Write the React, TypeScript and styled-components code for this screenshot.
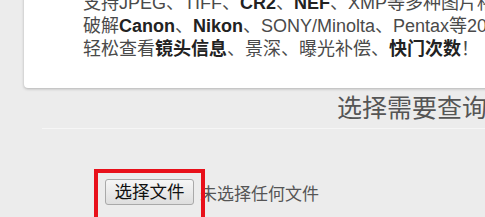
import React from 'react';
import styled, { createGlobalStyle } from 'styled-components';

const GlobalStyle = createGlobalStyle`
  html, body {
    margin: 0;
    padding: 0;
    background: #ececec;
    overflow: hidden;
  }
  body {
    font-family: 'Liberation Sans', 'Noto Sans CJK SC', sans-serif;
  }
`;

const Page = styled.div`
  width: 485px;
  height: 217px;
  overflow: hidden;
`;

const Card = styled.div`
  margin: -8px -80px 0 24px;
  padding: 0 0 27px 59px;
  background: #fff;
  border-radius: 4px;
  box-shadow: 0 1px 3px rgba(0, 0, 0, 0.25);
`;

const Line = styled.p`
  margin: 0;
  font-size: 18px;
  line-height: 23px;
  color: #4a4a4a;
  white-space: nowrap;

  b {
    color: #222;
    font-weight: bold;
  }
`;

const Heading = styled.h2`
  margin: 3px 0 0 42px;
  padding: 0 0 3px 295px;
  border-bottom: 1px solid #f6f6f6;
  font-size: 25px;
  line-height: 34px;
  font-weight: normal;
  color: #555;
  white-space: nowrap;
`;

const UploadRow = styled.div`
  display: flex;
  align-items: center;
  gap: 6px;
  margin-top: 50px;
  padding-left: 105px;
`;

const ButtonWrap = styled.div`
  position: relative;
`;

const FileButton = styled.button`
  width: 89px;
  height: 26px;
  padding: 0;
  border: 1px solid #a9a9a9;
  border-radius: 3px;
  background: linear-gradient(#f6f6f6, #dedede);
  font-family: 'Liberation Sans', 'Noto Sans CJK SC', sans-serif;
  font-size: 17.5px;
  line-height: 24px;
  color: #111;
`;

const Highlight = styled.span`
  position: absolute;
  left: -11px;
  right: -11px;
  top: -10px;
  bottom: -16px;
  border: 4px solid #e8101a;
  pointer-events: none;
  z-index: 1;
`;

const FileName = styled.span`
  font-size: 17px;
  color: #555;
  white-space: nowrap;
`;

export default function App() {
  return (
    <Page>
      <GlobalStyle />
      <Card>
        <Line>
          支持JPEG、TIFF、<b>CR2</b>、<b>NEF</b>、XMP等多种图片格式
        </Line>
        <Line>
          破解<b>Canon</b>、<b>Nikon</b>、SONY/Minolta、Pentax等20多种相机
        </Line>
        <Line>
          轻松查看<b>镜头信息</b>、景深、曝光补偿、<b>快门次数</b>！
        </Line>
      </Card>
      <Heading>选择需要查询的照片</Heading>
      <UploadRow>
        <ButtonWrap>
          <FileButton>选择文件</FileButton>
          <Highlight />
        </ButtonWrap>
        <FileName>未选择任何文件</FileName>
      </UploadRow>
    </Page>
  );
}
